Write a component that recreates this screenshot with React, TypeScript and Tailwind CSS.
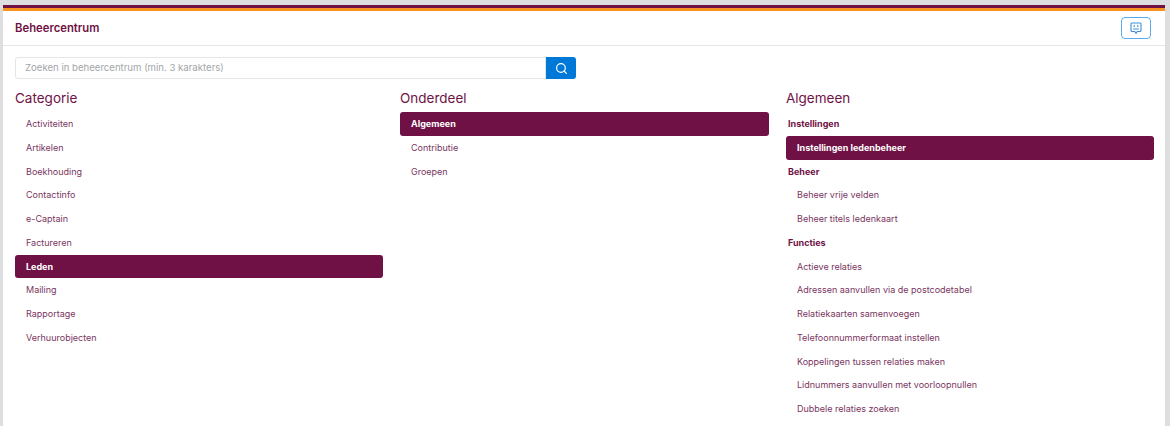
import React from 'react';
import { Search } from 'lucide-react';

const categories = ['Activiteiten', 'Artikelen', 'Boekhouding', 'Contactinfo', 'e-Captain', 'Factureren', 'Leden', 'Mailing', 'Rapportage', 'Verhuurobjecten'];
const parts = ['Algemeen', 'Contributie', 'Groepen'];
const functies = [
  'Actieve relaties',
  'Adressen aanvullen via de postcodetabel',
  'Relatiekaarten samenvoegen',
  'Telefoonnummerformaat instellen',
  'Koppelingen tussen relaties maken',
  'Lidnummers aanvullen met voorloopnullen',
  'Dubbele relaties zoeken',
];

function Item({ label, active }: { label: string; active?: boolean }) {
  if (active) {
    return (
      <div className="h-[23.75px] flex items-center pl-[11px] rounded-[3px] bg-[#701145] text-white font-bold text-[9px]">
        {label}
      </div>
    );
  }
  return <div className="h-[23.75px] flex items-center pl-[11px] text-[#7a3560] text-[9px]">{label}</div>;
}

function Heading({ label }: { label: string }) {
  return <div className="h-[23.75px] flex items-center pl-[2px] text-[#701145] font-bold text-[9px]">{label}</div>;
}

function ChatIcon() {
  return (
    <svg width="14" height="14" viewBox="0 0 14 14" fill="none" stroke="#3f8fd8" strokeWidth="1.1" strokeLinecap="round" strokeLinejoin="round">
      <path d="M3 2h8a1 1 0 0 1 1 1v6.5a1 1 0 0 1-1 1H8.2L7 12.4 5.8 10.5H3a1 1 0 0 1-1-1V3a1 1 0 0 1 1-1z" />
      <path d="M5.2 4.4v1.4M8.8 4.4v1.4M4.6 8h4.8" />
    </svg>
  );
}

export default function App() {
  return (
    <div className="h-[426px] w-[1170px] overflow-hidden bg-[#dcdee0] pl-[3px] pt-[5px] pr-[5px] font-['Inter',sans-serif]">
      <div className="h-full bg-white">
        <div className="h-[3px] bg-[#701145]" />
        <div className="h-[3px] bg-[#f7931e]" />
        <div className="h-[35px] flex items-center justify-between pl-3 pr-[14px] border-b border-[#e3e5e7]">
          <div className="text-[#701145] font-semibold text-[11.3px]">Beheercentrum</div>
          <button type="button" className="w-[30px] h-[22px] flex items-center justify-center rounded-[4px] border border-[#5aa9ea] bg-white">
            <ChatIcon />
          </button>
        </div>
        <div className="pl-3 pr-[11px] pt-[11px]">
          <div className="flex w-[561px] h-[22px]">
            <div className="flex-1 flex items-center pl-[9px] border border-[#e3e5e7] rounded-l-[3px] text-[#a3a5a8] text-[9.6px]">
              Zoeken in beheercentrum (min. 3 karakters)
            </div>
            <button type="button" className="w-[30px] flex items-center justify-center bg-[#0078d7] rounded-r-[3px]">
              <Search className="w-[13px] h-[13px] text-white" strokeWidth={2.25} />
            </button>
          </div>
          <div className="flex gap-[17px] mt-[7px]">
            <div className="w-[368px]">
              <div className="h-6 flex items-center text-[#701145] text-[13.5px]">Categorie</div>
              <div className="mt-[2px]">
                {categories.map((c) => (
                  <Item key={c} label={c} active={c === 'Leden'} />
                ))}
              </div>
            </div>
            <div className="w-[369px]">
              <div className="h-6 flex items-center text-[#701145] text-[13.5px]">Onderdeel</div>
              <div className="mt-[2px]">
                {parts.map((p) => (
                  <Item key={p} label={p} active={p === 'Algemeen'} />
                ))}
              </div>
            </div>
            <div className="w-[368px]">
              <div className="h-6 flex items-center text-[#701145] text-[13.5px]">Algemeen</div>
              <div className="mt-[2px]">
                <Heading label="Instellingen" />
                <Item label="Instellingen ledenbeheer" active />
                <Heading label="Beheer" />
                <Item label="Beheer vrije velden" />
                <Item label="Beheer titels ledenkaart" />
                <Heading label="Functies" />
                {functies.map((f) => (
                  <Item key={f} label={f} />
                ))}
              </div>
            </div>
          </div>
        </div>
      </div>
    </div>
  );
}
